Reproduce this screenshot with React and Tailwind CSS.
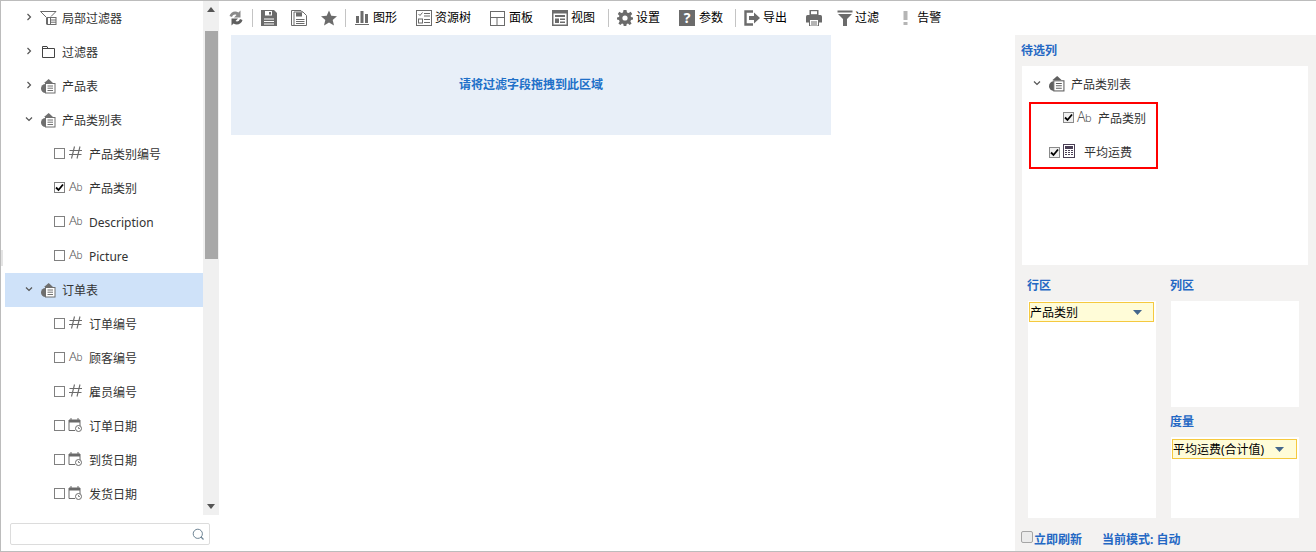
import React from "react";

const G = "#6b6b6b";
const Sv = ({ w = 16, h = 16, children, className = "" }) => (
  <svg width={w} height={h} viewBox={`0 0 ${w} ${h}`} className={`shrink-0 ${className}`} fill="none">{children}</svg>
);

const Chevron = ({ open }) => (
  <svg width="8" height="8" viewBox="0 0 8 8" fill="none" className="shrink-0">
    {open ? <path d="M1 2.5L4 5.5L7 2.5" stroke="#555" strokeWidth="1.2" /> : <path d="M2.5 1L5.5 4L2.5 7" stroke="#555" strokeWidth="1.2" />}
  </svg>
);

const TableIcon = ({ size = 15, dark }) => {
  const c = dark ? "#5f5f5f" : "#6f6f6f";
  return (
    <svg width={size} height={size} viewBox="0 0 15 15" fill="none" className="shrink-0">
      <path d="M3 4L7.7 0L12 4Z" fill={c} />
      <path d="M4.5 5A4.5 4.5 0 0 0 4.5 14Z" fill={c} />
      <rect x="4.5" y="4.5" width="9.5" height="9.5" stroke={c} fill="#fff" />
      <path d="M6.5 7h5.5M6.5 9.2h5.5M6.5 11.5h5.5" stroke={c} />
    </svg>
  );
};
const FilterTableIcon = () => (
  <Sv w={17} h={14} className="-ml-px">
    <path d="M0.5 0.5H16L11 5.5M0.5 0.5L6.5 6.5V13.5" stroke={G} />
    <rect x="7.5" y="6.5" width="8.5" height="7" stroke={G} fill="#fff" />
    <path d="M10.5 7v6M11 9h5M11 11.2h5" stroke={G} />
  </Sv>
);
const FolderIcon = () => (
  <Sv w={15} h={12}>
    <path d="M1.5 0.5H6L7 2.5H13.5V11.5H1.5Z" stroke="#444" />
    <path d="M1.5 2.5H7" stroke="#444" />
  </Sv>
);
const Hash = () => (
  <Sv w={13} h={13}>
    <path d="M5.5 0.5L2.5 12.5M11 0.5L8 12.5M0.5 4.5H13M0 8.5H12.5" stroke={G} strokeWidth="1.1" />
  </Sv>
);
const Ab = () => (
  <span className="w-[13px] text-[13px] leading-[13px] font-light text-[#555] whitespace-nowrap tracking-[-0.5px] shrink-0">
    A<span className="text-[10px]">b</span>
  </span>
);
const CalIcon = () => (
  <Sv w={14} h={14} className="-ml-px">
    <path d="M1 2H12V4H1Z" fill={G} stroke={G} />
    <path d="M1 4V12.5H7M12 4V8" stroke={G} />
    <path d="M3 0V2M10 0V2" stroke={G} />
    <circle cx="10.5" cy="10.5" r="3" stroke={G} fill="#fff" />
    <path d="M10.5 9V10.5H12" stroke={G} strokeWidth="0.8" />
  </Sv>
);

const Check = ({ on, soft }) => (
  <span className={`w-[11px] h-[11px] border flex items-center justify-center shrink-0 ${soft ? "border-[#8a8a8a] bg-[#f0f0f0]" : "border-[#808080] bg-white"}`}>
    {on && (
      <svg width="9" height="9" viewBox="0 0 9 9" fill="none">
        <path d="M1 4.5L3.5 7L8 1.5" stroke="#000" strokeWidth="1.8" />
      </svg>
    )}
  </span>
);

const Group = ({ open, icon, label, active }) => (
  <div className={`h-[34px] flex items-center shrink-0 pl-[20px] ${active ? "bg-[#cfe2f9]" : ""}`}>
    <span className="w-[16px] flex -mt-[3px]"><Chevron open={open} /></span>
    <span className="w-[21px] flex">{icon}</span>
    <span className="whitespace-nowrap pt-[2px]">{label}</span>
  </div>
);
const Leaf = ({ icon, label, on }) => (
  <div className="h-[34px] flex items-center shrink-0 pl-[49px]">
    <span className="-mt-[1px] flex"><Check on={on} /></span>
    <span className="ml-[4px] w-[20px] flex -mt-[3px]">{icon}</span>
    <span className="whitespace-nowrap pt-[2px]">{label}</span>
  </div>
);

const Sep = ({ className = "" }) => <span className={`w-px h-[18px] bg-[#c4c4c4] shrink-0 ${className}`} />;
const Tool = ({ icon, label, className = "", gap = "ml-[3px]" }) => (
  <div className={`flex items-center shrink-0 ${className}`}>
    {icon}
    {label && <span className={`text-black whitespace-nowrap ${gap}`}>{label}</span>}
  </div>
);

const IcoRefresh = () => (
  <Sv w={14} h={16} className="-ml-px">
    <path d="M0.5 6C1.5 2 6 0 9.5 2.5L11.5 0.5V7.5H5L7.5 5C6 4 4 4.5 3 7Z" fill="#8a8a8a" />
    <path d="M13.5 10C12.5 14 8 16 4.5 13.5L2.5 15.5V8.5H9L6.5 11C8 12 10 11.5 11 9Z" fill="#5f5f5f" />
  </Sv>
);
const IcoSave = () => (
  <Sv>
    <path d="M0 0H13L16 3V16H0Z" fill={G} />
    <rect x="4" y="1" width="7" height="4.5" fill="#fff" />
    <rect x="8" y="2" width="2" height="2.5" fill={G} />
    <path d="M3 9H13M3 11.5H13M3 14H13" stroke="#fff" />
  </Sv>
);
const IcoSaveAs = () => (
  <Sv>
    <path d="M0.5 0.5H10L12 2.5M0.5 0.5V15.5H3" stroke={G} />
    <path d="M3 2H12L15.5 5.5V15.5H3Z" fill="#fff" stroke={G} />
    <rect x="5" y="2.5" width="6" height="4" fill={G} />
    <path d="M5 9.5H13.5M5 11.5H13.5M5 13.5H13.5" stroke={G} />
  </Sv>
);
const IcoStar = () => (
  <Sv>
    <path d="M8 0.5L10.3 5.7L16 6.2L11.7 10L13 15.5L8 12.6L3 15.5L4.3 10L0 6.2L5.7 5.7Z" fill={G} />
  </Sv>
);
const IcoBars = () => (
  <Sv w={14} h={16}>
    <rect x="1" y="6" width="3" height="7" fill={G} />
    <rect x="5.5" y="1" width="3" height="12" fill={G} />
    <rect x="10" y="4" width="3" height="9" fill={G} />
    <path d="M0 14.5H14" stroke={G} />
  </Sv>
);
const IcoTree = () => (
  <Sv>
    <rect x="0.5" y="0.5" width="15" height="15" stroke={G} />
    <path d="M2.5 4L4 5.5L6.5 2.5" stroke={G} />
    <path d="M8 3.5H14M8 6H14" stroke={G} />
    <rect x="2.5" y="9" width="4" height="4" stroke={G} />
    <path d="M8 9.5H14M8 12.5H14" stroke={G} />
  </Sv>
);
const IcoPanel = () => (
  <Sv w={15} h={15}>
    <rect x="0.5" y="0.5" width="14" height="14" stroke={G} />
    <path d="M0.5 6.5H14.5M7 6.5V14.5" stroke={G} />
  </Sv>
);
const IcoView = () => (
  <Sv>
    <rect width="16" height="16" fill={G} />
    <rect x="1.5" y="3.5" width="13" height="11" fill="#fff" />
    <rect x="3" y="5" width="10" height="2" fill={G} />
    <rect x="3" y="8.5" width="4" height="4.5" fill={G} />
    <rect x="8" y="8.5" width="5" height="1.5" fill={G} />
    <rect x="8" y="11.5" width="5" height="1.5" fill={G} />
  </Sv>
);
const IcoGear = () => (
  <Sv>
    <path d="M6.5 0H9.5L10 2.4L11.6 3.1L13.7 1.8L15.2 3.9L13.6 5.7L14 7L16 7.5V9.5L14 10L13.4 11.5L14.6 13.6L12.6 15L11 13.6L9.7 14L9.3 16H6.7L6.3 14L5 13.6L3.4 15L1.4 13.6L2.6 11.5L2 10L0 9.5V7.5L2 7L2.4 5.7L0.8 3.9L2.3 1.8L4.4 3.1L6 2.4Z" fill={G} />
    <circle cx="8" cy="8" r="2.6" fill="#fff" />
  </Sv>
);
const IcoHelp = () => (
  <div className="w-[16px] h-[16px] bg-[#6b6b6b] text-white font-bold text-[14px] leading-[16px] text-center">?</div>
);
const IcoExport = () => (
  <Sv>
    <path d="M9 1.5H1.5V14.5H9" stroke={G} strokeWidth="2.4" />
    <path d="M5 6H10V2.5L16 8L10 13.5V10H5Z" fill={G} />
  </Sv>
);
const IcoPrint = () => (
  <Sv>
    <rect x="3.5" y="0" width="9" height="5" fill={G} />
    <rect x="5" y="1.2" width="6" height="3" fill="#fff" />
    <path d="M1.5 5H14.5Q16 5 16 6.5V12.5H0V6.5Q0 5 1.5 5Z" fill={G} />
    <rect x="3.5" y="9.5" width="9" height="6.5" fill="#fff" stroke={G} />
    <path d="M5 12H11M5 14H11" stroke={G} />
  </Sv>
);
const IcoFunnel = () => (
  <Sv>
    <path d="M0.5 0.5H15.5V2.5H0.5Z" fill={G} />
    <path d="M1 4H15L10 9V16H6V9Z" fill={G} />
  </Sv>
);
const IcoAlert = () => (
  <Sv w={5} h={14}>
    <rect x="0.5" y="0" width="4" height="9" fill="#b5b5b5" />
    <rect x="0.5" y="11" width="4" height="3" fill="#b5b5b5" />
  </Sv>
);
const IcoCalc = () => (
  <Sv w={13} h={14}>
    <rect x="0.5" y="0.5" width="11" height="13" stroke="#4a3f55" fill="#fff" />
    <rect x="2" y="2" width="8" height="3" fill="#4a3f55" />
    <path d="M2 6.5H10M2 8.5H10M2 10.5H10" stroke="#4a3f55" strokeDasharray="2 1" />
  </Sv>
);

const Drop = ({ children, gap }) => (
  <div className="ml-px mr-[2px] mt-px h-[20px] border border-[#f5c93f] bg-[#fffcd8] flex items-center text-black leading-none">
    <span className="whitespace-nowrap pt-[1px]">{children}</span>
    <svg width="9" height="5" viewBox="0 0 9 5" className={`shrink-0 ${gap}`}>
      <path d="M0 0H9L4.5 5Z" fill="#44678c" />
    </svg>
  </div>
);

const Label = ({ children, className = "" }) => (
  <div className={`font-bold text-[#2468c4] whitespace-nowrap ${className}`}>{children}</div>
);

export default function App() {
  return (
    <div
      className="relative w-[1316px] h-[552px] border-t border-l border-b border-[#bcbcbc] bg-white flex text-[12px] text-[#333] overflow-hidden"
      style={{ fontFamily: '"Noto Sans", "Noto Sans CJK SC", sans-serif' }}
    >
      {/* sidebar */}
      <aside className="w-[218px] shrink-0 flex flex-col">
        <div className="h-[514px] flex shrink-0">
          <div className="w-[4px] shrink-0 flex items-center">
            <span className="w-[2px] h-[16px] bg-[#e4e4e4]" />
          </div>
          <div className="w-[198px] shrink-0 flex flex-col overflow-hidden">
            <Group icon={<FilterTableIcon />} label="局部过滤器" />
            <Group icon={<FolderIcon />} label="过滤器" />
            <Group icon={<TableIcon />} label="产品表" />
            <Group open icon={<TableIcon />} label="产品类别表" />
            <Leaf icon={<Hash />} label="产品类别编号" />
            <Leaf on icon={<Ab />} label="产品类别" />
            <Leaf icon={<Ab />} label="Description" />
            <Leaf icon={<Ab />} label="Picture" />
            <Group open active icon={<TableIcon />} label="订单表" />
            <Leaf icon={<Hash />} label="订单编号" />
            <Leaf icon={<Ab />} label="顾客编号" />
            <Leaf icon={<Hash />} label="雇员编号" />
            <Leaf icon={<CalIcon />} label="订单日期" />
            <Leaf icon={<CalIcon />} label="到货日期" />
            <Leaf icon={<CalIcon />} label="发货日期" />
          </div>
          <div className="w-[16px] shrink-0 bg-[#f0f0f0] flex flex-col items-center">
            <div className="h-[30px] w-full flex justify-center pt-[6px]">
              <svg width="8" height="5" viewBox="0 0 8 5"><path d="M0 5H8L4 0Z" fill="#555" /></svg>
            </div>
            <div className="w-[13px] h-[228px] bg-[#a8a8a8]" />
            <div className="flex-1" />
            <div className="h-[14px] pb-[6px] flex items-end">
              <svg width="8" height="5" viewBox="0 0 8 5"><path d="M0 0H8L4 5Z" fill="#555" /></svg>
            </div>
          </div>
        </div>
        <div className="ml-[9px] mt-[8px] w-[200px] h-[22px] border border-[#dcdcdc] rounded-[2px] flex items-center justify-end pr-[4px]">
          <svg width="13" height="13" viewBox="0 0 13 13" fill="none">
            <circle cx="5.8" cy="5.8" r="4.6" stroke="#6e8494" />
            <path d="M9 9L11.5 11.5" stroke="#6e8494" strokeWidth="1.2" />
          </svg>
        </div>
      </aside>

      {/* main */}
      <main className="flex-1 min-w-0 flex flex-col">
        <div className="h-[34px] shrink-0 flex items-center pl-[11px]">
          <Tool icon={<IcoRefresh />} />
          <Sep className="ml-[9px]" />
          <Tool icon={<IcoSave />} className="ml-[8px]" />
          <Tool icon={<IcoSaveAs />} className="ml-[14px]" />
          <Tool icon={<IcoStar />} className="ml-[14px]" />
          <Sep className="ml-[8px]" />
          <Tool icon={<IcoBars />} label="图形" gap="ml-[4px]" className="ml-[9px]" />
          <Tool icon={<IcoTree />} label="资源树" className="ml-[19px]" />
          <Tool icon={<IcoPanel />} label="面板" gap="ml-[4px]" className="ml-[19px]" />
          <Tool icon={<IcoView />} label="视图" className="ml-[19px]" />
          <Sep className="ml-[13px]" />
          <Tool icon={<IcoGear />} label="设置" className="ml-[8px]" />
          <Tool icon={<IcoHelp />} label="参数" gap="ml-[4px]" className="ml-[19px]" />
          <Sep className="ml-[12px]" />
          <Tool icon={<IcoExport />} label="导出" className="ml-[8px]" />
          <Tool icon={<IcoPrint />} className="ml-[19px]" />
          <Tool icon={<IcoFunnel />} label="过滤" gap="ml-[2px]" className="ml-[15px]" />
          <Tool icon={<IcoAlert />} className="ml-[24px]" />
          <span className="ml-[9px] text-black whitespace-nowrap">告警</span>
        </div>
        <div className="ml-[12px] w-[600px] h-[100px] bg-[#e8eff8] flex items-center justify-center">
          <span className="font-bold text-[#2070c8]">请将过滤字段拖拽到此区域</span>
        </div>
      </main>

      {/* right panel */}
      <section className="w-[301px] shrink-0 mt-[34px] bg-[#f3f2f1] flex flex-col">
        <Label className="ml-[6px] mt-[8px] leading-[16px]">待选列</Label>
        <div className="ml-[7px] mt-[7px] w-[286px] h-[199px] bg-white shrink-0 flex flex-col">
          <div className="h-[34px] mt-[1px] flex items-center pl-[11px] shrink-0">
            <span className="w-[16px] flex -mt-[3px]"><Chevron open /></span>
            <span className="w-[22px] flex"><TableIcon size={16} dark /></span>
            <span className="pt-[2px]">产品类别表</span>
          </div>
          <div className="h-[34px] flex items-center pl-[41px] shrink-0">
            <span className="-mt-[2px] flex"><Check on soft /></span>
            <span className="ml-[3px] w-[21px] flex -mt-[2px]">
              <span className="text-[14px] leading-[14px] font-light text-[#555] tracking-[-0.5px]">A<span className="text-[11px]">b</span></span>
            </span>
            <span className="pt-[2px]">产品类别</span>
          </div>
          <div className="h-[34px] flex items-center pl-[27px] shrink-0">
            <span className="mt-[1px] flex"><Check on soft /></span>
            <span className="ml-[3px] w-[21px] flex -mt-[3px]"><IcoCalc /></span>
            <span className="pt-[2px]">平均运费</span>
          </div>
        </div>
        <div className="flex mt-[13px] ml-[13px] flex-1 min-h-0">
          <div className="w-[128px] flex flex-col">
            <Label className="-ml-[1px] leading-[16px]">行区</Label>
            <div className="mt-[7px] h-[217px] bg-white">
              <Drop gap="ml-[55px]">产品类别</Drop>
            </div>
          </div>
          <div className="ml-[15px] w-[128px] flex flex-col">
            <Label className="-ml-[1px] leading-[16px]">列区</Label>
            <div className="mt-[7px] h-[106px] bg-white" />
            <Label className="-ml-[1px] mt-[7px] leading-[16px]">度量</Label>
            <div className="mt-[7px] h-[81px] bg-white pt-px">
              <Drop gap="ml-[11px]">平均运费(合计值)</Drop>
            </div>
          </div>
        </div>
        <div className="h-[33px] shrink-0 flex items-center pl-[6px] pt-[10px]">
          <span className="w-[12px] h-[12px] rounded-[2px] border border-[#a5a5a5] bg-[#ebebeb] -mt-[6px]" />
          <Label className="ml-px">立即刷新</Label>
          <Label className="ml-[20px]">当前模式: 自动</Label>
        </div>
      </section>

      {/* annotation */}
      <div className="absolute left-[1028px] top-[101px] w-[129px] h-[67px] border-2 border-[#ff0000] pointer-events-none" />
    </div>
  );
}
